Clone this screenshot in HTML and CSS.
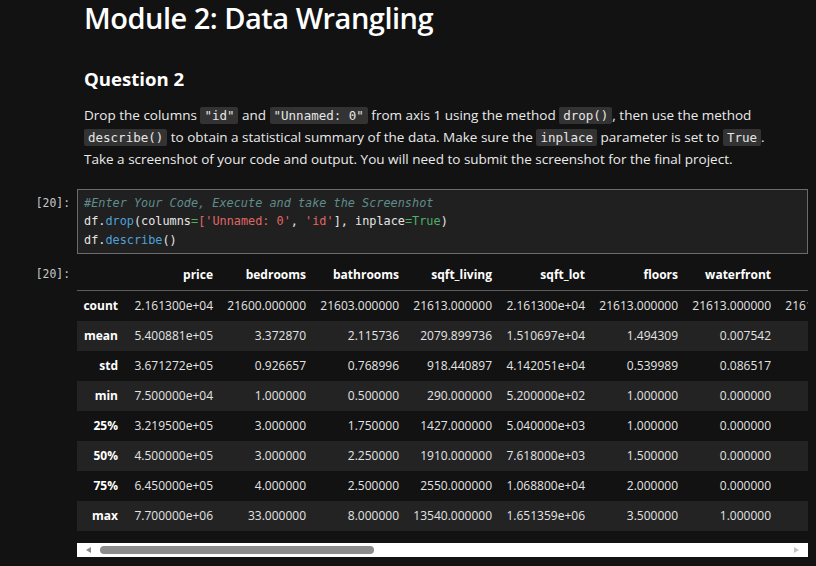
FILE: index.html
```html
<!DOCTYPE html>
<html>
<head>
<meta charset="utf-8">
<link rel="stylesheet" href="styles.css">
</head>
<body>
<div class="notebook">
  <div class="md">
    <h1 class="title">Module 2: Data Wrangling</h1>
    <h2 class="question">Question 2</h2>
    <p class="text">Drop the columns <code class="ic">"id"</code> and <code class="ic">"Unnamed: 0"</code> from axis 1 using the method <code class="ic">drop()</code>, then use the method <code class="ic">describe()</code> to obtain a statistical summary of the data. Make sure the <code class="ic">inplace</code> parameter is set to <code class="ic">True</code>. Take a screenshot of your code and output. You will need to submit the screenshot for the final project.</p>
  </div>

  <div class="cell code-cell">
    <div class="prompt">[20]:</div>
    <div class="editor"><span class="cm">#Enter Your Code, Execute and take the Screenshot</span>
df.<span class="fn">drop</span>(columns<span class="op">=</span><span class="st">[</span><span class="st">'Unnamed: 0'</span>, <span class="st">'id'</span>], inplace<span class="op">=</span><span class="kw">True</span>)
df.<span class="fn">describe</span>()</div>
  </div>

  <div class="cell out-cell">
    <div class="prompt out-prompt">[20]:</div>
    <div class="output">
      <div class="table-wrap">
        <table class="df">
          <colgroup>
            <col class="w-idx"><col class="w-price"><col class="w-col"><col class="w-col"><col class="w-col"><col class="w-col"><col class="w-col"><col class="w-col"><col class="w-col">
          </colgroup>
          <thead>
            <tr><th class="idx"></th><th>price</th><th>bedrooms</th><th>bathrooms</th><th>sqft_living</th><th>sqft_lot</th><th>floors</th><th>waterfront</th><th>view</th></tr>
          </thead>
          <tbody>
            <tr><th class="idx">count</th><td>2.161300e+04</td><td>21600.000000</td><td>21603.000000</td><td>21613.000000</td><td>2.161300e+04</td><td>21613.000000</td><td>21613.000000</td><td>21613.000000</td></tr>
            <tr><th class="idx">mean</th><td>5.400881e+05</td><td>3.372870</td><td>2.115736</td><td>2079.899736</td><td>1.510697e+04</td><td>1.494309</td><td>0.007542</td><td>0.234303</td></tr>
            <tr><th class="idx">std</th><td>3.671272e+05</td><td>0.926657</td><td>0.768996</td><td>918.440897</td><td>4.142051e+04</td><td>0.539989</td><td>0.086517</td><td>0.766318</td></tr>
            <tr><th class="idx">min</th><td>7.500000e+04</td><td>1.000000</td><td>0.500000</td><td>290.000000</td><td>5.200000e+02</td><td>1.000000</td><td>0.000000</td><td>0.000000</td></tr>
            <tr><th class="idx">25%</th><td>3.219500e+05</td><td>3.000000</td><td>1.750000</td><td>1427.000000</td><td>5.040000e+03</td><td>1.000000</td><td>0.000000</td><td>0.000000</td></tr>
            <tr><th class="idx">50%</th><td>4.500000e+05</td><td>3.000000</td><td>2.250000</td><td>1910.000000</td><td>7.618000e+03</td><td>1.500000</td><td>0.000000</td><td>0.000000</td></tr>
            <tr><th class="idx">75%</th><td>6.450000e+05</td><td>4.000000</td><td>2.500000</td><td>2550.000000</td><td>1.068800e+04</td><td>2.000000</td><td>0.000000</td><td>0.000000</td></tr>
            <tr><th class="idx">max</th><td>7.700000e+06</td><td>33.000000</td><td>8.000000</td><td>13540.000000</td><td>1.651359e+06</td><td>3.500000</td><td>1.000000</td><td>4.000000</td></tr>
          </tbody>
        </table>
      </div>
      <div class="hscroll">
        <span class="arrow-left"></span>
        <span class="thumb"></span>
        <span class="track-fill"></span>
        <span class="arrow-right"></span>
      </div>
    </div>
  </div>
</div>
</body>
</html>
```

FILE: styles.css
```css
html, body {
  margin: 0;
  padding: 0;
  background: #121212;
}

body {
  width: 816px;
  height: 566px;
  overflow: hidden;
  font-family: "Open Sans", "Noto Sans", sans-serif;
  color: #e8e8e8;
}

.notebook {
  display: flex;
  flex-direction: column;
}

.md {
  padding-left: 84px;
  padding-right: 24px;
}

.title {
  margin: 0;
  font-size: 29px;
  line-height: 36px;
  font-weight: 600;
  letter-spacing: -0.5px;
  color: #ffffff;
}

.question {
  margin: 30px 0 0 0;
  font-size: 18.6px;
  line-height: 26px;
  font-weight: 700;
  color: #ffffff;
}

.text {
  margin: 12px 0 0 0;
  font-size: 13.5px;
  line-height: 22px;
  color: #eaeaea;
}

.ic {
  font-family: "DejaVu Sans Mono", monospace;
  font-size: 12.5px;
  line-height: 16px;
  background: #333333;
  color: #e6e6e6;
  padding: 1px 4px;
  border-radius: 2px;
}

.cell {
  display: flex;
  align-items: flex-start;
}

.prompt {
  width: 70px;
  flex: 0 0 70px;
  padding-right: 7px;
  text-align: right;
  font-family: "DejaVu Sans Mono", monospace;
  font-size: 11.4px;
  color: #c8c8c8;
  box-sizing: content-box;
}

.code-cell {
  margin-top: 19px;
}

.code-cell .prompt {
  padding-top: 5px;
  line-height: 18px;
}

.editor {
  width: 731px;
  box-sizing: border-box;
  border: 1px solid #6b6b6b;
  background: #202020;
  padding: 4px 6px 4px 6px;
  font-family: "DejaVu Sans Mono", monospace;
  font-size: 11.85px;
  line-height: 18.4px;
  color: #e6e6e6;
  white-space: pre;
}

.cm { color: #5f8c8c; font-style: italic; }
.fn { color: #4ea0dc; }
.st { color: #e06666; }
.op { color: #4fb06a; }
.kw { color: #4fb06a; }

.out-cell {
  margin-top: 4px;
}

.out-prompt {
  line-height: 32px;
}

.output {
  width: 731px;
  display: flex;
  flex-direction: column;
}

.table-wrap {
  width: 731px;
  overflow: hidden;
}

.df {
  border-collapse: collapse;
  table-layout: fixed;
  width: 793px;
  font-size: 12px;
  color: #e4e4e4;
}

.w-idx { width: 47px; }
.w-price { width: 95px; }
.w-col { width: 93px; }

.df th, .df td {
  padding: 0 6px 0 0;
  text-align: right;
  white-space: nowrap;
  overflow: hidden;
}

.df thead th {
  height: 32px;
  font-weight: 700;
  color: #ffffff;
  border-bottom: 1px solid #5c5c5c;
}

.df tbody tr {
  height: 30px;
}

.df tbody th {
  font-weight: 700;
  color: #ffffff;
}

.df tbody tr:nth-child(even) {
  background: #232323;
}

.hscroll {
  margin-top: 12px;
  height: 14px;
  background: #ffffff;
  display: flex;
  align-items: center;
}

.arrow-left {
  width: 0;
  height: 0;
  margin-left: 9px;
  border-top: 3.5px solid transparent;
  border-bottom: 3.5px solid transparent;
  border-right: 5px solid #8a8a8a;
}

.thumb {
  margin-left: 9px;
  width: 274px;
  height: 8px;
  border-radius: 4px;
  background: #8c8c8c;
}

.track-fill {
  flex: 1;
}

.arrow-right {
  width: 0;
  height: 0;
  margin-right: 9px;
  border-top: 3.5px solid transparent;
  border-bottom: 3.5px solid transparent;
  border-left: 5px solid #c4c4c4;
}
```
